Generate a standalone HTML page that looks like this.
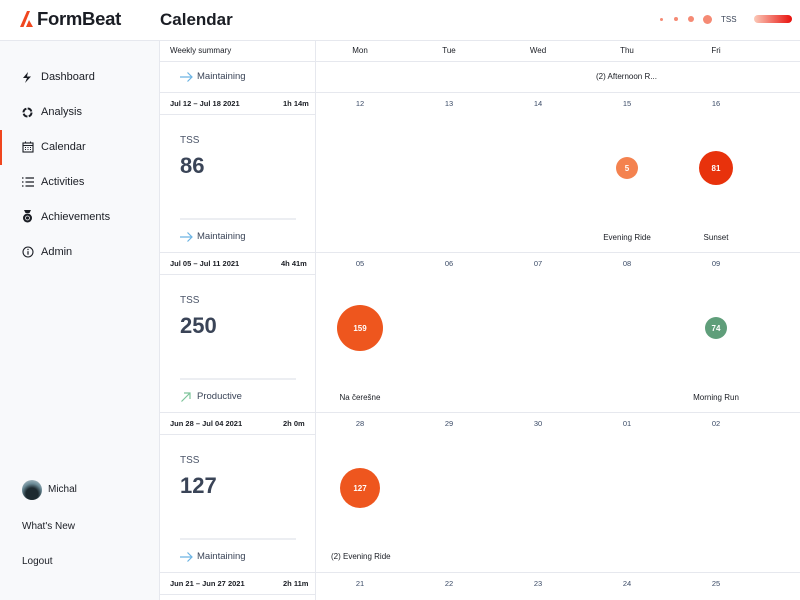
<!DOCTYPE html>
<html><head><meta charset="utf-8"><style>
*{margin:0;padding:0;box-sizing:border-box}
body{width:800px;height:600px;overflow:hidden;position:relative;background:#fff;font-family:"Liberation Sans",sans-serif;color:#1a1d24}
.a{position:absolute;white-space:nowrap}
.c{text-align:center}
.hl{position:absolute;height:1px;background:#e6e8ee}
.vl{position:absolute;width:1px;background:#e6e8ee}
.nav{position:absolute;left:41px;font-size:11px;color:#1a1d24}
.ic{position:absolute;left:22px}
.sm{font-size:8px;color:#1a1d24}
.dn{font-size:7.5px;color:#3a4a66;width:40px;text-align:center}
.circ{position:absolute;border-radius:50%;color:#fff;font-size:8px;font-weight:bold;display:flex;align-items:center;justify-content:center}
.lbl{font-size:8px;color:#1a1d24;text-align:center;width:100px}
.tss{font-size:10px;color:#4a5468}
.big{font-size:22px;font-weight:bold;color:#3a4457}
.st{font-size:9.5px;color:#3a4457}
</style></head><body>
<div class="a" style="left:0;top:41px;width:160px;height:559px;background:#f8f9fb"></div>
<div class="vl" style="left:159px;top:41px;height:559px"></div>
<div class="hl" style="left:0;top:40px;width:800px"></div>
<svg class="a" style="left:20px;top:11px" width="13" height="16" viewBox="0 0 13 16"><path d="M0 16 L7 0 L10 0 L3.5 16Z M6 16 L9 9 L13 16Z" fill="#f0461e"/></svg>
<div class="a" style="left:37px;top:8px;font-size:18.5px;font-weight:bold;letter-spacing:-0.3px">FormBeat</div>
<div class="a" style="left:160px;top:10px;font-size:17px;font-weight:bold">Calendar</div>
<div class="a" style="left:660px;top:18px;width:3px;height:3px;border-radius:50%;background:#f58a74"></div>
<div class="a" style="left:674px;top:17px;width:4px;height:4px;border-radius:50%;background:#f58a74"></div>
<div class="a" style="left:688px;top:16px;width:6px;height:6px;border-radius:50%;background:#f58a74"></div>
<div class="a" style="left:703px;top:15px;width:9px;height:9px;border-radius:50%;background:#f58a74"></div>
<div class="a" style="left:721px;top:15px;font-size:8px;color:#3a4457">TSS</div>
<div class="a" style="left:754px;top:15px;width:38px;height:8px;border-radius:4px;background:linear-gradient(90deg,#fbc9b8,#e8100c)"></div>
<svg class="ic" style="top:72px" width="10" height="11" viewBox="0 0 10 11"><path d="M6 0 L1 6 L5 6 L3 11 L9 4.5 L5 4.5 Z" fill="#1a1d24"/></svg>
<svg class="ic" style="top:107px" width="11" height="11" viewBox="0 0 11 11"><circle cx="5.5" cy="5.5" r="4" fill="none" stroke="#1a1d24" stroke-width="2" stroke-dasharray="5 1.3"/></svg>
<svg class="ic" style="top:141px" width="12" height="12" viewBox="0 0 12 12"><rect x="1" y="2" width="10" height="9" fill="none" stroke="#1a1d24" stroke-width="1.1"/><line x1="1" y1="4.5" x2="11" y2="4.5" stroke="#1a1d24"/><line x1="3.5" y1="0.5" x2="3.5" y2="2.5" stroke="#1a1d24"/><line x1="8.5" y1="0.5" x2="8.5" y2="2.5" stroke="#1a1d24"/><path d="M3 6.5h1M5.5 6.5h1M8 6.5h1M3 8.5h1M5.5 8.5h1M8 8.5h1" stroke="#1a1d24"/></svg>
<svg class="ic" style="top:177px" width="12" height="10" viewBox="0 0 12 10"><path d="M0 1h1.5M0 5h1.5M0 9h1.5M3.5 1H12M3.5 5H12M3.5 9H12" stroke="#1a1d24" stroke-width="1.2"/></svg>
<svg class="ic" style="top:210px" width="11" height="13" viewBox="0 0 11 13"><path d="M2 0h7l-1.5 3h-4z" fill="#1a1d24"/><circle cx="5.5" cy="8" r="4.5" fill="#1a1d24"/><circle cx="5.5" cy="8" r="2" fill="none" stroke="#f8f9fb" stroke-width="0.8"/></svg>
<svg class="ic" style="top:246px" width="12" height="12" viewBox="0 0 12 12"><circle cx="6" cy="6" r="5" fill="none" stroke="#1a1d24" stroke-width="1.1"/><path d="M6 5.2v3.5" stroke="#1a1d24" stroke-width="1.2"/><circle cx="6" cy="3.5" r="0.7" fill="#1a1d24"/></svg>
<div class="nav" style="top:71px">Dashboard</div>
<div class="nav" style="top:106px">Analysis</div>
<div class="nav" style="top:141px">Calendar</div>
<div class="nav" style="top:176px">Activities</div>
<div class="nav" style="top:211px">Achievements</div>
<div class="nav" style="top:246px">Admin</div>
<div class="a" style="left:0;top:130px;width:2px;height:35px;background:#f0461e"></div>
<div class="a" style="left:22px;top:480px;width:20px;height:20px;border-radius:50%;background:radial-gradient(circle at 50% 70%,#1d2a30 35%,#6a8a96 60%,#c9d6dc 100%)"></div>
<div class="a" style="left:48px;top:484px;font-size:10px">Michal</div>
<div class="a" style="left:22px;top:521px;font-size:10px">What's New</div>
<div class="a" style="left:22px;top:556px;font-size:10px">Logout</div>

<div class="vl" style="left:315px;top:41px;height:559px"></div>
<div class="hl" style="left:160px;top:61px;width:640px"></div>
<div class="hl" style="left:160px;top:92px;width:640px"></div>
<div class="hl" style="left:160px;top:252px;width:640px"></div>
<div class="hl" style="left:160px;top:412px;width:640px"></div>
<div class="hl" style="left:160px;top:572px;width:640px"></div>
<div class="hl" style="left:160px;top:114px;width:155px"></div>
<div class="hl" style="left:160px;top:274px;width:155px"></div>
<div class="hl" style="left:160px;top:434px;width:155px"></div>
<div class="hl" style="left:160px;top:594px;width:155px"></div>
<div class="hl" style="left:180px;top:218px;width:116px;height:2px;background:#eceef2"></div>
<div class="hl" style="left:180px;top:378px;width:116px;height:2px;background:#eceef2"></div>
<div class="hl" style="left:180px;top:538px;width:116px;height:2px;background:#eceef2"></div>

<div class="a sm" style="left:170px;top:46px">Weekly summary</div>
<div class="a sm c" style="left:340px;top:46px;width:40px">Mon</div>
<div class="a sm c" style="left:429px;top:46px;width:40px">Tue</div>
<div class="a sm c" style="left:518px;top:46px;width:40px">Wed</div>
<div class="a sm c" style="left:607px;top:46px;width:40px">Thu</div>
<div class="a sm c" style="left:696px;top:46px;width:40px">Fri</div>

<svg class="a" style="left:180px;top:72px" width="13" height="10" viewBox="0 0 13 10"><path d="M0 5h12M7.5 0.5L12 5 7.5 9.5" fill="none" stroke="#6cb4e4" stroke-width="1.2"/></svg>
<div class="a st" style="left:197px;top:71px">Maintaining</div>
<div class="a sm" style="left:596px;top:72px">(2) Afternoon R...</div>

<div class="a sm" style="left:170px;top:99px;font-weight:bold;font-size:7.5px">Jul 12 – Jul 18 2021</div>
<div class="a sm" style="left:283px;top:99px;font-weight:bold;font-size:7.5px">1h 14m</div>
<div class="a tss" style="left:180px;top:135px">TSS</div>
<div class="a big" style="left:180px;top:153px">86</div>
<svg class="a" style="left:180px;top:232px" width="13" height="10" viewBox="0 0 13 10"><path d="M0 5h12M7.5 0.5L12 5 7.5 9.5" fill="none" stroke="#6cb4e4" stroke-width="1.2"/></svg>
<div class="a st" style="left:197px;top:231px">Maintaining</div>
<div class="a dn" style="left:340px;top:99px">12</div>
<div class="a dn" style="left:429px;top:99px">13</div>
<div class="a dn" style="left:518px;top:99px">14</div>
<div class="a dn" style="left:607px;top:99px">15</div>
<div class="a dn" style="left:696px;top:99px">16</div>
<div class="circ" style="left:616px;top:157px;width:22px;height:22px;background:#f4824f">5</div>
<div class="circ" style="left:699px;top:151px;width:34px;height:34px;background:#e8320c">81</div>
<div class="a lbl" style="left:577px;top:233px">Evening Ride</div>
<div class="a lbl" style="left:666px;top:233px">Sunset</div>

<div class="a sm" style="left:170px;top:259px;font-weight:bold;font-size:7.5px">Jul 05 – Jul 11 2021</div>
<div class="a sm" style="left:281px;top:259px;font-weight:bold;font-size:7.5px">4h 41m</div>
<div class="a tss" style="left:180px;top:295px">TSS</div>
<div class="a big" style="left:180px;top:313px">250</div>
<svg class="a" style="left:181px;top:392px" width="10" height="10" viewBox="0 0 10 10"><path d="M0.5 9.5L9 1M3 1h6v6" fill="none" stroke="#7dc49a" stroke-width="1.2"/></svg>
<div class="a st" style="left:197px;top:391px">Productive</div>
<div class="a dn" style="left:340px;top:259px">05</div>
<div class="a dn" style="left:429px;top:259px">06</div>
<div class="a dn" style="left:518px;top:259px">07</div>
<div class="a dn" style="left:607px;top:259px">08</div>
<div class="a dn" style="left:696px;top:259px">09</div>
<div class="circ" style="left:337px;top:305px;width:46px;height:46px;background:#ee561e">159</div>
<div class="circ" style="left:705px;top:317px;width:22px;height:22px;background:#5f9e7a">74</div>
<div class="a lbl" style="left:310px;top:393px">Na čerešne</div>
<div class="a lbl" style="left:666px;top:393px">Morning Run</div>

<div class="a sm" style="left:170px;top:419px;font-weight:bold;font-size:7.5px">Jun 28 – Jul 04 2021</div>
<div class="a sm" style="left:283px;top:419px;font-weight:bold;font-size:7.5px">2h 0m</div>
<div class="a tss" style="left:180px;top:455px">TSS</div>
<div class="a big" style="left:180px;top:473px">127</div>
<svg class="a" style="left:180px;top:552px" width="13" height="10" viewBox="0 0 13 10"><path d="M0 5h12M7.5 0.5L12 5 7.5 9.5" fill="none" stroke="#6cb4e4" stroke-width="1.2"/></svg>
<div class="a st" style="left:197px;top:551px">Maintaining</div>
<div class="a dn" style="left:340px;top:419px">28</div>
<div class="a dn" style="left:429px;top:419px">29</div>
<div class="a dn" style="left:518px;top:419px">30</div>
<div class="a dn" style="left:607px;top:419px">01</div>
<div class="a dn" style="left:696px;top:419px">02</div>
<div class="circ" style="left:340px;top:468px;width:40px;height:40px;background:#ee561e">127</div>
<div class="a sm" style="left:331px;top:552px">(2) Evening Ride</div>

<div class="a sm" style="left:170px;top:579px;font-weight:bold;font-size:7.5px">Jun 21 – Jun 27 2021</div>
<div class="a sm" style="left:283px;top:579px;font-weight:bold;font-size:7.5px">2h 11m</div>
<div class="a dn" style="left:340px;top:579px">21</div>
<div class="a dn" style="left:429px;top:579px">22</div>
<div class="a dn" style="left:518px;top:579px">23</div>
<div class="a dn" style="left:607px;top:579px">24</div>
<div class="a dn" style="left:696px;top:579px">25</div>
</body></html>
